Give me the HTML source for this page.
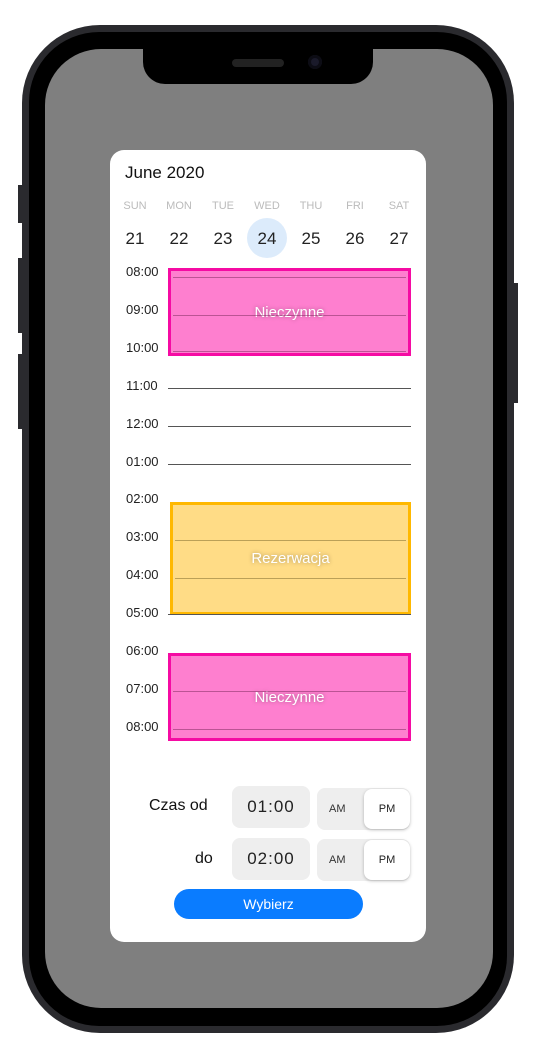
<!DOCTYPE html>
<html><head><meta charset="utf-8"><style>
*{margin:0;padding:0;box-sizing:border-box}
body{width:542px;height:1057px;background:#fff;position:relative;overflow:hidden;font-family:"Liberation Sans","DejaVu Sans",sans-serif}
.phone{position:absolute;left:22px;top:25px;width:492px;height:1008px;border-radius:78px;background:#2a2a2e}
.inner{position:absolute;left:29px;top:32px;width:478px;height:994px;border-radius:70px;background:#000}
.screen{position:absolute;left:45px;top:49px;width:448px;height:959px;border-radius:56px;background:#7f7f7f}
.notch{position:absolute;left:143px;top:40px;width:230px;height:44px;background:#000;border-radius:0 0 22px 22px}
.spk{position:absolute;left:232px;top:59px;width:52px;height:8px;border-radius:4px;background:#222}
.cam{position:absolute;left:308px;top:55px;width:14px;height:14px;border-radius:50%;background:#1a1a2a;box-shadow:inset 0 0 0 3px #0c0c14}
.btn{position:absolute;background:#2a2a2e;width:5px}
.card{position:absolute;left:110px;top:150px;width:316px;height:792px;background:#fff;border-radius:14px}
.t{position:absolute;white-space:nowrap}
.title{left:15px;top:13px;font-size:17px;color:#111}
.dow{top:50px;font-size:11px;color:#bbb;width:40px;text-align:center}
.day{top:79px;font-size:17px;color:#222;width:40px;text-align:center}
.hl{position:absolute;left:137px;top:68px;width:40px;height:40px;border-radius:50%;background:#dcebfb}
.hr{left:16px;font-size:13px;color:#222}
.line{position:absolute;left:58px;width:243px;height:1px;background:#555}
.blk{position:absolute;left:58px;width:243px;display:flex;align-items:center;justify-content:center;color:#fff;font-size:15px;text-shadow:0 0 4px rgba(0,0,0,.35)}
.pk{background:#fe7fcf;border:3px solid #f50ba3}
.yl{background:#ffdc86;border:3px solid #ffb800;left:60px;width:241px}
.in{position:absolute;left:2px;right:2px;height:1px;background:rgba(120,40,90,.5)}
.yl .in{background:rgba(120,100,40,.5)}
.tb{position:absolute;left:122px;width:78px;height:42px;background:#eee;border-radius:8px;font-size:17px;color:#222;display:flex;align-items:center;justify-content:center;letter-spacing:1px}
.seg{position:absolute;left:207px;width:93px;height:42px;background:#eee;border-radius:8px}
.seg .am{position:absolute;left:12px;top:15px;font-size:11px;color:#333}
.seg .pm{position:absolute;right:0;top:1px;width:46px;height:40px;background:#fff;border-radius:8px;box-shadow:0 1px 3px rgba(0,0,0,.25);font-size:11px;color:#222;display:flex;align-items:center;justify-content:center}
.lbl{font-size:16px;color:#111}
.go{position:absolute;left:64px;top:739px;width:189px;height:30px;border-radius:15px;background:#0a7cff;color:#fff;font-size:14px;display:flex;align-items:center;justify-content:center}
</style></head><body>
<div class="btn" style="left:18px;top:185px;height:38px"></div>
<div class="btn" style="left:18px;top:258px;height:75px"></div>
<div class="btn" style="left:18px;top:354px;height:75px"></div>
<div class="btn" style="left:513px;top:283px;height:120px"></div>
<div class="phone"></div><div class="inner"></div>
<div class="screen"></div>
<div class="notch"></div><div class="spk"></div><div class="cam"></div>
<div class="card">
<div class="t title">June 2020</div>
<div class="hl"></div>
<div class="t dow" style="left:5px">SUN</div><div class="t dow" style="left:49px">MON</div><div class="t dow" style="left:93px">TUE</div><div class="t dow" style="left:137px">WED</div><div class="t dow" style="left:181px">THU</div><div class="t dow" style="left:225px">FRI</div><div class="t dow" style="left:269px">SAT</div>
<div class="t day" style="left:5px">21</div><div class="t day" style="left:49px">22</div><div class="t day" style="left:93px">23</div><div class="t day" style="left:137px">24</div><div class="t day" style="left:181px">25</div><div class="t day" style="left:225px">26</div><div class="t day" style="left:269px">27</div>
<div class="t hr" style="top:114px">08:00</div>
<div class="t hr" style="top:152px">09:00</div>
<div class="t hr" style="top:190px">10:00</div>
<div class="t hr" style="top:228px">11:00</div>
<div class="t hr" style="top:266px">12:00</div>
<div class="t hr" style="top:304px">01:00</div>
<div class="t hr" style="top:341px">02:00</div>
<div class="t hr" style="top:379px">03:00</div>
<div class="t hr" style="top:417px">04:00</div>
<div class="t hr" style="top:455px">05:00</div>
<div class="t hr" style="top:493px">06:00</div>
<div class="t hr" style="top:531px">07:00</div>
<div class="t hr" style="top:569px">08:00</div>
<div class="line" style="top:238px"></div>
<div class="line" style="top:276px"></div>
<div class="line" style="top:314px"></div>
<div class="blk pk" style="top:118px;height:88px"><div class="in" style="top:6px"></div><div class="in" style="top:44px"></div><div class="in" style="top:80px"></div>Nieczynne</div>
<div class="blk yl" style="top:352px;height:113px"><div class="in" style="top:35px"></div><div class="in" style="top:73px"></div>Rezerwacja</div>
<div class="line" style="top:464px"></div>
<div class="blk pk" style="top:503px;height:88px"><div class="in" style="top:35px"></div><div class="in" style="top:73px"></div>Nieczynne</div>
<div class="t lbl" style="left:39px;top:647px">Czas od</div>
<div class="tb" style="top:636px">01:00</div>
<div class="seg" style="top:638px"><span class="am">AM</span><div class="pm">PM</div></div>
<div class="t lbl" style="left:85px;top:700px">do</div>
<div class="tb" style="top:688px">02:00</div>
<div class="seg" style="top:689px"><span class="am">AM</span><div class="pm">PM</div></div>
<div class="go">Wybierz</div>
</div>
</body></html>
